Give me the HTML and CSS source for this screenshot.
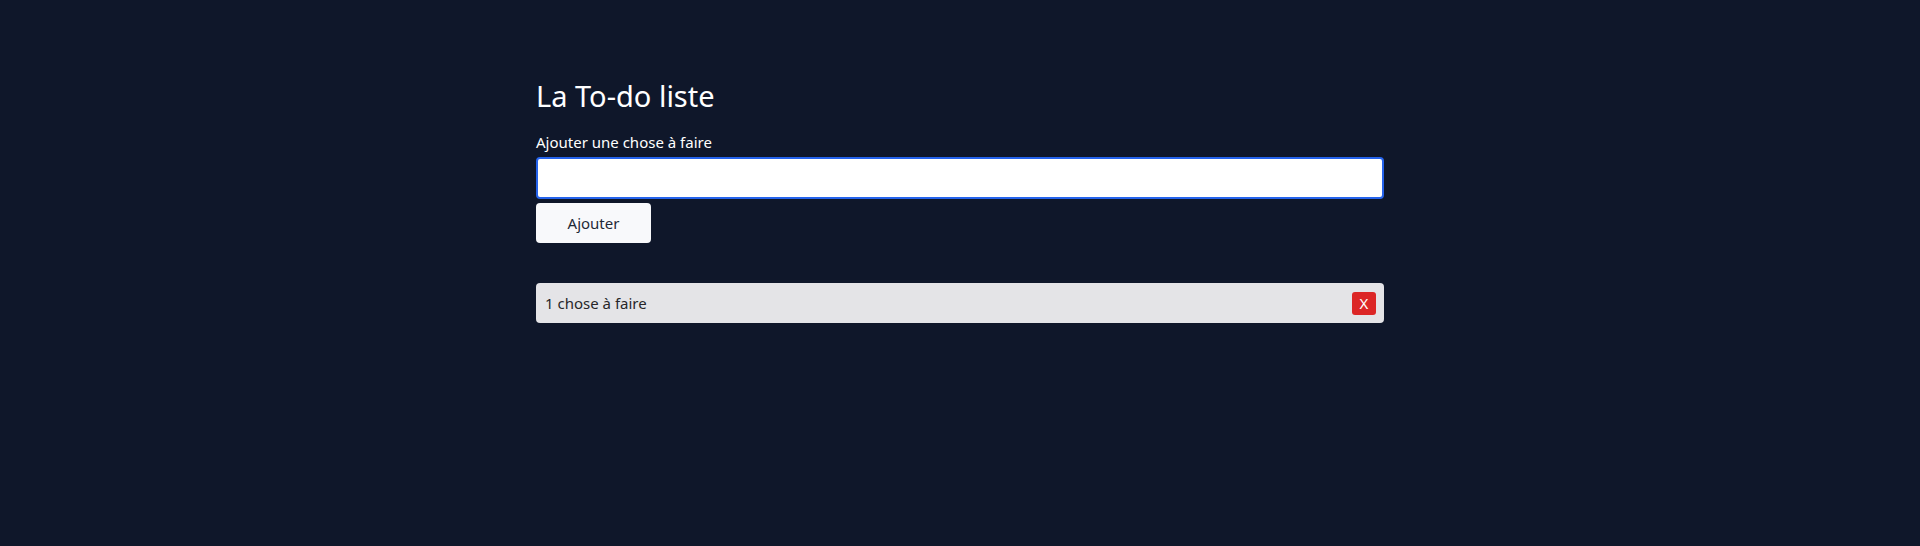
FILE: index.html
```html
<!DOCTYPE html>
<html lang="fr">
<head>
<meta charset="utf-8">
<title>La To-do liste</title>
<link rel="stylesheet" href="styles.css">
</head>
<body>
<main class="container">
  <h1 class="title">La To-do liste</h1>
  <form class="form">
    <label class="label" for="todo">Ajouter une chose à faire</label>
    <input class="input" id="todo" type="text">
    <button class="add-btn" type="button">Ajouter</button>
  </form>
  <ul class="list">
    <li class="item">
      <span class="item-text">1 chose à faire</span>
      <button class="del-btn" type="button">X</button>
    </li>
  </ul>
</main>
</body>
</html>
```

FILE: styles.css
```css
* { box-sizing: border-box; }
html, body { margin: 0; padding: 0; }
body {
  background: #0f172a;
  font-family: "Noto Sans", "Open Sans", sans-serif;
  color: #fff;
  height: 546px;
}
.container {
  width: 848px;
  margin: 0 auto;
  padding-top: 76px;
}
.title {
  margin: 0;
  font-size: 29px;
  font-weight: 400;
  line-height: 40px;
}
.form {
  display: flex;
  flex-direction: column;
  align-items: flex-start;
  margin-top: 15px;
}
.label {
  font-size: 15px;
  line-height: 22px;
  margin-bottom: 4px;
}
.input {
  width: 100%;
  height: 42px;
  border: 2px solid #2563eb;
  border-radius: 4px;
  background: #fff;
  outline: none;
}
.add-btn {
  margin-top: 4px;
  width: 115px;
  height: 40px;
  border: none;
  border-radius: 4px;
  background: #f8f9fb;
  color: #1f2937;
  font-family: inherit;
  font-size: 15px;
}
.list {
  list-style: none;
  margin: 40px 0 0;
  padding: 0;
}
.item {
  display: flex;
  align-items: center;
  justify-content: space-between;
  height: 40px;
  padding: 0 8px 0 9px;
  background: #e4e4e7;
  border-radius: 4px;
  color: #27272a;
  font-size: 15px;
}
.del-btn {
  width: 24px;
  height: 23px;
  border: none;
  border-radius: 3px;
  background: #dc2626;
  color: #fff;
  font-family: inherit;
  font-size: 15px;
  padding: 0;
}
```
